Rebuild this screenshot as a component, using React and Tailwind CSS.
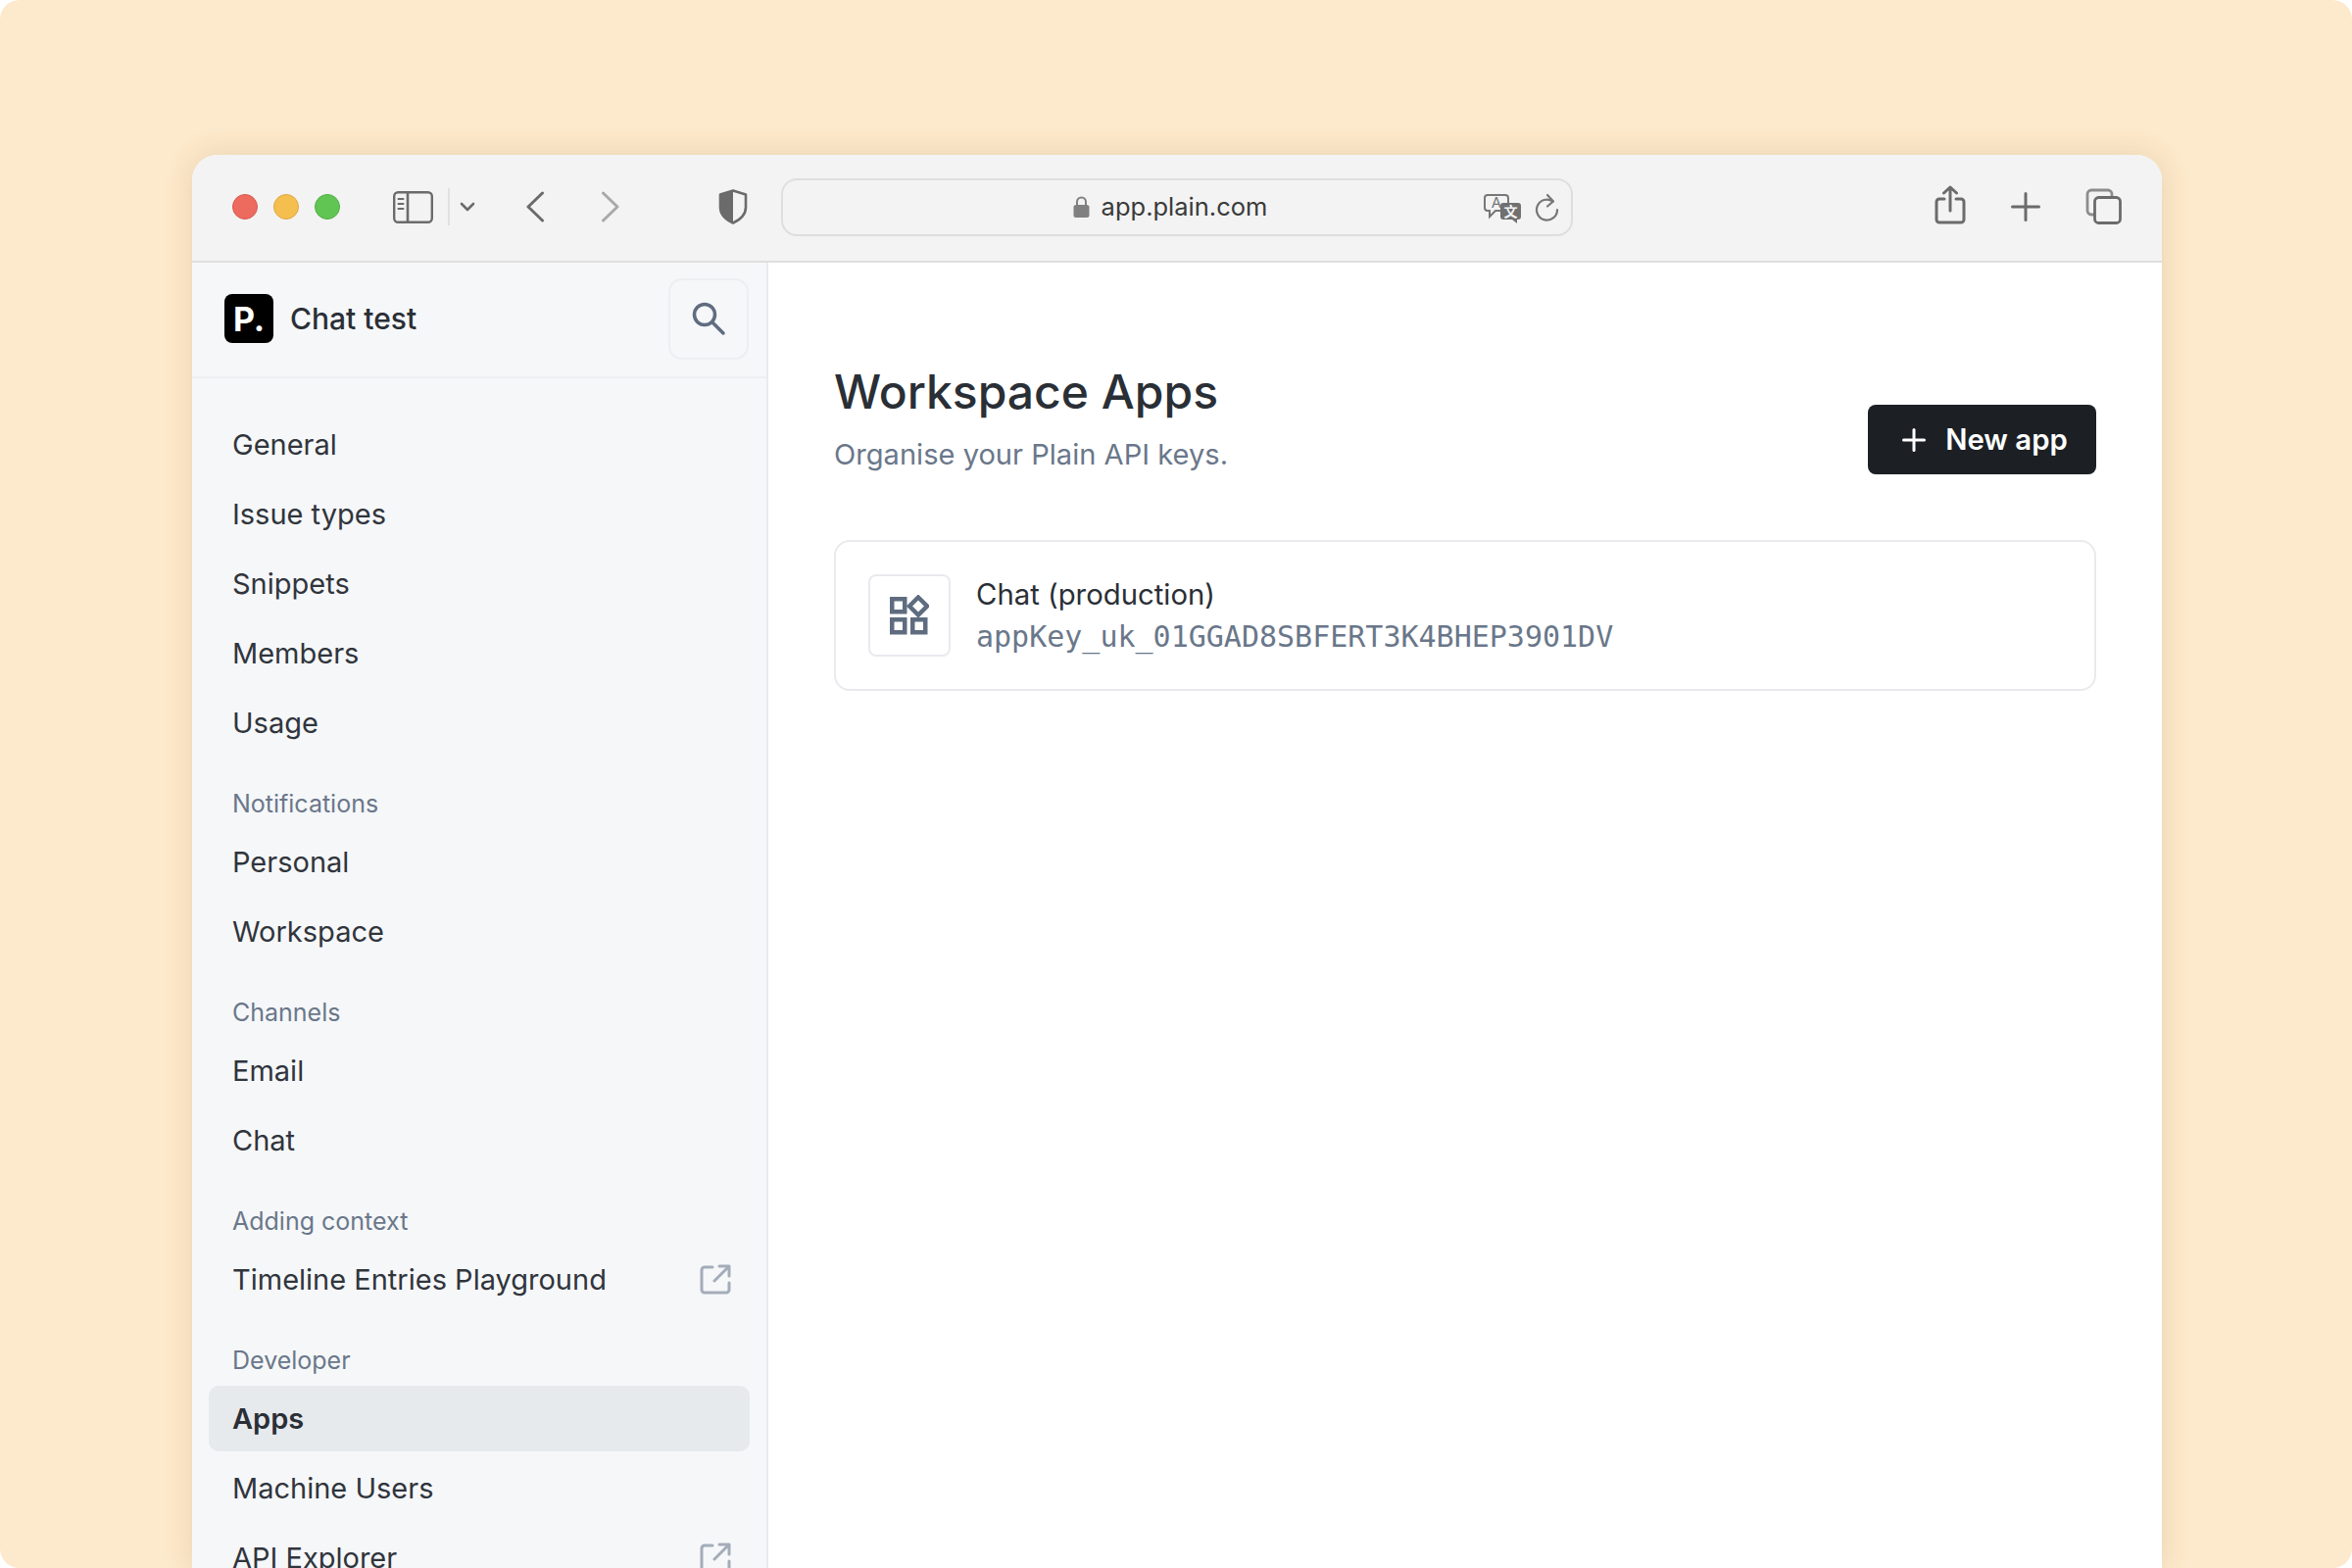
import { Plus } from "lucide-react";

const SECTIONS = [
  { items: ["General", "Issue types", "Snippets", "Members", "Usage"] },
  { label: "Notifications", items: ["Personal", "Workspace"] },
  { label: "Channels", items: ["Email", "Chat"] },
  { label: "Adding context", items: ["Timeline Entries Playground"], external: true },
  { label: "Developer", items: ["Apps", "Machine Users", "API Explorer"] },
];

function ExternalIcon() {
  return (
    <svg width="32" height="31" viewBox="0 0 32 31" fill="none" stroke="#a3adb9" strokeWidth="3" strokeLinecap="round" strokeLinejoin="round">
      <path d="M13 3H5a3 3 0 0 0-3 3v20a3 3 0 0 0 3 3h22a3 3 0 0 0 3-3v-7" />
      <path d="M20 2h10v10M30 2 15 17" />
    </svg>
  );
}

function NavItem({ name, active, external }) {
  return (
    <div className={`flex h-[67px] shrink-0 items-center justify-between rounded-[10px] pl-[24px] pr-[19px] text-[29px] ${active ? "bg-[#e7eaed] font-semibold text-[#2a2f36]" : "text-[#30353c]"}`}>
      <span>{name}</span>
      {external && <ExternalIcon />}
    </div>
  );
}

function Toolbar() {
  return (
    <div className="flex h-[110px] shrink-0 items-center border-b-2 border-[#dfdfdf] bg-[#f3f3f3] pb-[2px] text-[#6b6b6b]">
      <div className="ml-[41px] flex gap-[16px]">
        <div className="h-[26px] w-[26px] rounded-full border border-[#d9574e] bg-[#ec6a5e]" />
        <div className="h-[26px] w-[26px] rounded-full border border-[#dfa83f] bg-[#f4bf4f]" />
        <div className="h-[26px] w-[26px] rounded-full border border-[#4fb044] bg-[#61c554]" />
      </div>
      <svg className="ml-[54px]" width="41" height="33" viewBox="0 0 41 33" fill="none" stroke="currentColor" strokeWidth="2.4">
        <rect x="1.2" y="1.2" width="38.6" height="30.6" rx="4" />
        <path d="M15 1v31" strokeWidth="2.6" />
        <path d="M5.5 8h5M5.5 13h5M5.5 18h5" strokeWidth="2" strokeLinecap="round" />
      </svg>
      <div className="ml-[15px] h-[38px] w-[2px] bg-[#e0e0e0]" />
      <svg className="ml-[10px]" width="16" height="10" viewBox="0 0 16 10" fill="none" stroke="currentColor" strokeWidth="2.6" strokeLinecap="round" strokeLinejoin="round">
        <path d="M2 2l6 6 6-6" />
      </svg>
      <svg className="ml-[51px]" width="20" height="32" viewBox="0 0 20 32" fill="none" stroke="currentColor" strokeWidth="3" strokeLinecap="round" strokeLinejoin="round">
        <path d="M17.5 2 3 16l14.5 14" />
      </svg>
      <svg className="ml-[57px]" width="20" height="32" viewBox="0 0 20 32" fill="none" stroke="#a9a9a9" strokeWidth="3" strokeLinecap="round" strokeLinejoin="round">
        <path d="M2.5 2 17 16 2.5 30" />
      </svg>
      <svg className="ml-[100px]" width="30" height="36" viewBox="0 0 30 36">
        <path d="M15 1.5 28 5.5v13c0 8-6.500 13-13 16-6.500-3-13-8-13-16v-13Z" fill="none" stroke="currentColor" strokeWidth="2.600" strokeLinejoin="round" />
        <path d="M15 1.500 2 5.500v13c0 8 6.500 13 13 16Z" fill="currentColor" />
      </svg>
      <div className="relative ml-[34px] flex h-[59px] w-[808px] items-center justify-center rounded-[16px] border-2 border-[#dedede] pr-[14px] text-[25.500px] text-[#3a3a3a]">
        <svg className="mr-[12px]" width="17" height="24" viewBox="0 0 17 24" fill="#808080">
          <path d="M4 10V7a4.500 4.500 0 0 1 9 0v3" fill="none" stroke="#808080" strokeWidth="2" />
          <rect x="0.500" y="10" width="16" height="13" rx="2.500" />
        </svg>
        <span>app.plain.com</span>
        <svg className="absolute left-[714px] top-[13px]" width="42" height="32" viewBox="0 0 42 32">
          <path d="M5 2h18a3 3 0 0 1 3 3v10a3 3 0 0 1-3 3H13l-6 6v-6H5a3 3 0 0 1-3-3V5a3 3 0 0 1 3-3Z" fill="#f3f3f3" stroke="#777" strokeWidth="2" />
          <text x="14" y="15" textAnchor="middle" fontSize="15" fontFamily="Inter, sans-serif" fill="#777">A</text>
          <path d="M21 10h15a3 3 0 0 1 3 3v11a3 3 0 0 1-3 3h-1v4l-5-4h-9a3 3 0 0 1-3-3V13a3 3 0 0 1 3-3Z" fill="#707070" />
          <text x="28.500" y="24" textAnchor="middle" fontSize="14" fontWeight="700" fontFamily="'Noto Sans CJK SC', sans-serif" fill="#f3f3f3">文</text>
        </svg>
        <svg className="absolute left-[767px] top-[13px]" width="26" height="31" viewBox="0 0 26 31" fill="none" stroke="#777" strokeWidth="2.200" strokeLinecap="round" strokeLinejoin="round">
          <path d="M18.500 8.500A10.500 10.500 0 1 0 23 17" />
          <path d="M13 2l6 6.500-6 5" />
        </svg>
      </div>
      <svg className="mb-[4px] ml-[369px]" width="32" height="40" viewBox="0 0 32 40" fill="none" stroke="currentColor" strokeWidth="3" strokeLinecap="round" strokeLinejoin="round">
        <path d="M10 14H5a3 3 0 0 0-3 3v18a3 3 0 0 0 3 3h22a3 3 0 0 0 3-3V17a3 3 0 0 0-3-3h-5" />
        <path d="M16 26V2M9.500 8 16 2l6.500 6" />
      </svg>
      <svg className="ml-[46px]" width="30" height="30" viewBox="0 0 30 30" fill="none" stroke="currentColor" strokeWidth="3" strokeLinecap="round">
        <path d="M15 1.500v27M1.500 15h27" />
      </svg>
      <svg className="mb-[2px] ml-[46px]" width="37" height="37" viewBox="0 0 37 37" fill="none" stroke="currentColor" strokeWidth="2.800" strokeLinejoin="round">
        <rect x="9.500" y="9.500" width="26" height="26" rx="4" />
        <path d="M9 27H6a4 4 0 0 1-4-4V6a4 4 0 0 1 4-4h17a4 4 0 0 1 4 4v3" opacity="0.75" />
      </svg>
    </div>
  );
}

function Sidebar() {
  return (
    <aside className="flex w-[588px] shrink-0 flex-col border-r-2 border-[#e8eaee] bg-[#f6f7f9]">
      <div className="flex h-[118px] shrink-0 items-center border-b-2 border-[#eceef1] pb-[2px] pl-[33px] pr-[18px]">
        <div className="flex h-[50px] w-[50px] items-center justify-center rounded-[8px] bg-black text-[34px] font-bold text-white">P.</div>
        <span className="ml-[17px] text-[30px] font-medium text-[#2a2f36]">Chat test</span>
        <div className="ml-auto flex h-[83px] w-[82px] items-center justify-center rounded-[14px] border-2 border-[#eceef1]">
          <svg width="36" height="36" viewBox="0 0 36 36" fill="none" stroke="#5f6c80" strokeWidth="3.500" strokeLinecap="round">
            <circle cx="14" cy="14" r="10.500" />
            <path d="M22 22 33 33" />
          </svg>
        </div>
      </div>
      <nav className="flex flex-col gap-[4px] pl-[17px] pr-[17px] pt-[34px]">
        {SECTIONS.map((s, i) => (
          <div key={i} className="flex flex-col gap-[4px]">
            {s.label && (
              <div className="mt-[25px] flex h-[42px] items-end pb-[7px] pl-[24px] text-[25px] leading-[30px] text-[#6a778a]">{s.label}</div>
            )}
            {s.items.map((name) => (
              <NavItem key={name} name={name} active={name === "Apps"} external={s.external || name === "API Explorer"} />
            ))}
          </div>
        ))}
      </nav>
    </aside>
  );
}

function AppCard() {
  return (
    <div className="mt-[67px] flex h-[154px] items-center rounded-[16px] border-2 border-[#e8eaee] pl-[33px]">
      <div className="flex h-[84px] w-[84px] items-center justify-center rounded-[8px] border-2 border-[#e8eaee]">
        <svg width="40" height="42" viewBox="0 0 40 42" fill="none" stroke="#5f6c80" strokeWidth="4.500">
          <rect x="2.250" y="4.250" width="13" height="13" />
          <rect x="2.250" y="25.250" width="13" height="13" />
          <rect x="23.250" y="25.250" width="13" height="13" />
          <path d="M29 2.500 38 11.500 29 20.500 20 11.500Z" />
        </svg>
      </div>
      <div className="ml-[26px] flex flex-col">
        <span className="text-[29.300px] leading-[42px] text-[#2a2f36]">Chat (production)</span>
        <span className="text-[30px] leading-[43px] text-[#6a778a] [font-family:'DejaVu_Sans_Mono',monospace]">appKey_uk_01GGAD8SBFERT3K4BHEP3901DV</span>
      </div>
    </div>
  );
}

export default function App() {
  return (
    <div className="h-[1600px] w-[2400px] overflow-hidden bg-white [font-family:Inter,sans-serif]">
      <div className="h-full overflow-hidden rounded-[20px] bg-[#fde9cb] pl-[196px] pr-[194px] pt-[158px]">
        <div className="flex h-[1442px] flex-col overflow-hidden rounded-t-[26px] bg-white shadow-[0_0_30px_rgba(120,90,40,0.16)]">
          <Toolbar />
          <div className="flex min-h-0 flex-1">
            <Sidebar />
            <main className="min-w-0 flex-1 pl-[67px] pr-[67px] pt-[103px]">
              <div className="flex items-end justify-between">
                <div>
                  <h1 className="text-[48px] leading-[58px] font-medium text-[#2a2f36]">Workspace Apps</h1>
                  <p className="mt-[15px] text-[29.100px] leading-[40px] text-[#6a778a]">Organise your Plain API keys.</p>
                </div>
                <button className="flex h-[71px] w-[233px] items-center justify-center gap-[14px] rounded-[8px] bg-[#1c1f24] text-[29.300px] font-semibold text-white">
                  <Plus size={36} strokeWidth={2} />
                  New app
                </button>
              </div>
              <AppCard />
            </main>
          </div>
        </div>
      </div>
    </div>
  );
}
